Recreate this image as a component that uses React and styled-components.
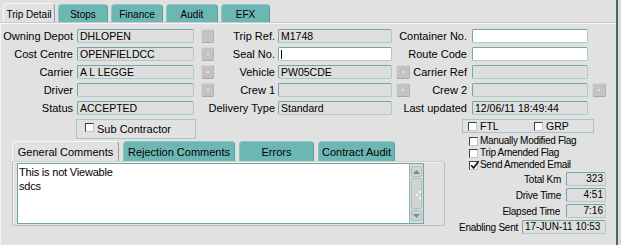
import styled, { createGlobalStyle } from "styled-components"

const teal = "#6cb7b4"
const tealLine = "#74a6a4"
const bg = "#e1e1e1"

const GlobalStyle = createGlobalStyle`
  html, body { margin: 0; padding: 0; background: ${bg}; }
  body {
    font-family: "Liberation Sans", Arial, sans-serif;
    font-size: 11px;
    color: #000;
  }
`

const Screen = styled.div`
  width: 621px;
  height: 245px;
  display: flex;
  overflow: hidden;
  background: ${bg};
`

const Main = styled.div`
  flex: 1;
  display: flex;
  flex-direction: column;
  min-width: 0;
`

const WindowEdge = styled.div`
  width: 5px;
  box-sizing: border-box;
  border-left: 2px solid #4f6767;
  background: #dadada;
`

const TabBar = styled.div`
  height: 23px;
  display: flex;
  align-items: flex-end;
  gap: ${p => p.$gap}px;
  padding-left: ${p => p.$left}px;
  box-sizing: border-box;
  flex-shrink: 0;
`

const Tab = styled.div`
  width: ${p => p.$w}px;
  height: ${p => p.$h}px;
  box-sizing: border-box;
  display: flex;
  align-items: center;
  justify-content: center;
  font-size: ${p => p.$size}px;
  white-space: nowrap;
  border-radius: 4px 4px 0 0;
  background: ${p => (p.$active ? bg : teal)};
  border: 1px solid ${p => (p.$active ? "#f7f7f7" : "#8cc6c3")};
  border-right-color: ${p => (p.$active ? "#9a9a9a" : "#5c9c99")};
  border-bottom: none;
  padding-top: 1px;
`

const Panel = styled.div`
  flex: 1;
  border-top: 1px solid #f7f7f7;
  border-left: 1px solid #f3f3f3;
  box-shadow: 0 -1px 0 #c9c9c9;
  padding-top: 3px;
  display: flex;
  flex-direction: column;
`

const FieldRow = styled.div`
  height: 18px;
  display: flex;
  align-items: center;
`

const Group = styled.div`
  display: flex;
  align-items: center;
  flex-shrink: 0;
`

const Label = styled.div`
  width: ${p => p.$w}px;
  margin-right: ${p => p.$gap}px;
  display: flex;
  justify-content: flex-end;
  white-space: nowrap;
  font-size: 11px;
  flex-shrink: 0;
`

const Input = styled.div`
  position: relative;
  width: ${p => p.$w}px;
  height: 14px;
  box-sizing: border-box;
  background: ${p => (p.$white ? "#fff" : "#dedede")};
  border: 1px solid;
  border-color: ${tealLine} #a9cbc9 #a9cbc9 ${tealLine};
  border-radius: 2px;
  font-size: ${p => p.$size || 10.5}px;
  line-height: 12px;
  padding: 0 2px;
  white-space: nowrap;
  overflow: hidden;
  text-align: ${p => (p.$right ? "right" : "left")};
  flex-shrink: 0;
`

const Caret = styled.span`
  position: absolute;
  left: 2px;
  top: 2px;
  width: 1px;
  height: 9px;
  background: #000;
`

const BtnSlot = styled.div`
  width: ${p => p.$w}px;
  margin-left: ${p => p.$gap}px;
  height: 14px;
  flex-shrink: 0;
`

const SmallButton = styled.div`
  width: 100%;
  height: 100%;
  box-sizing: border-box;
  background: #c3c3c3;
  border: 1px solid #d6d6d6;
  border-bottom-color: #a9a9a9;
  border-right-color: #b3b3b3;
  border-radius: 2px;
  display: flex;
  align-items: center;
  justify-content: center;

  &::after {
    content: "";
    width: 2px;
    height: 2px;
    background: ${p => (p.$dot ? "#e4e4e4" : "transparent")};
  }
`

const BottomArea = styled.div`
  display: flex;
`

const LeftBottom = styled.div`
  width: 461px;
  display: flex;
  flex-direction: column;
  flex-shrink: 0;
`

const GroupBox = styled.div`
  margin-top: 2px;
  margin-left: ${p => p.$left || 0}px;
  width: ${p => p.$w}px;
  height: ${p => p.$h}px;
  box-sizing: border-box;
  border: 1px solid #a3c9c7;
  display: flex;
  align-items: ${p => p.$align || "center"};
  padding: ${p => p.$pad};
`

const Check = styled.div`
  width: 9px;
  height: 9px;
  box-sizing: border-box;
  background: #fff;
  border: 1px solid;
  border-color: #3f3f3f #c4c4c4 #c4c4c4 #3f3f3f;
  flex-shrink: 0;
  position: relative;

  svg {
    position: absolute;
    left: 0;
    top: -2px;
  }
`

const CheckItem = styled.div`
  display: flex;
  align-items: ${p => p.$align || "center"};
  width: ${p => (p.$w ? `${p.$w}px` : "auto")};
  gap: ${p => p.$gap || 3}px;
  line-height: 12px;
  font-size: ${p => p.$size || 11}px;
  letter-spacing: ${p => p.$ls || 0}px;
  white-space: nowrap;
`

const CommentTabs = styled(TabBar)`
  height: 20px;
  margin-top: 2px;
  margin-left: 11px;
`

const CommentPanel = styled.div`
  margin-left: 11px;
  width: 433px;
  height: 65px;
  box-sizing: border-box;
  border: 1px solid #bdbdbd;
  border-top-color: #cfcfcf;
  border-radius: 0 3px 3px 3px;
  box-shadow: 1px 1px 0 #f2f2f2 inset;
  padding: 1px 0 0 4px;
`

const TextBox = styled.div`
  width: 407px;
  height: 61px;
  box-sizing: border-box;
  border: 1px solid ${tealLine};
  background: #fff;
  display: flex;
`

const TextContent = styled.div`
  flex: 1;
  padding: 1px 1px;
  font-size: 11px;
  line-height: 14px;
  letter-spacing: -0.2px;
`

const Scrollbar = styled.div`
  width: 14px;
  box-sizing: border-box;
  background: #d9d9d9;
  border-left: 1px solid #8dbab8;
  display: flex;
  flex-direction: column;
  gap: 1px;
  padding: 2px 1px 2px 1px;
`

const ScrollButton = styled.div`
  height: ${p => p.$h}px;
  box-sizing: border-box;
  border: 1px solid #9fc6c4;
  border-radius: 2px;
  background: #d2d2d2;
  display: flex;
  align-items: center;
  justify-content: center;
`

const Thumb = styled(ScrollButton)`
  flex: 1;
  position: relative;
`

const Dot = styled.span`
  position: absolute;
  width: 2px;
  height: 2px;
  background: #fafafa;
`

const RightBottom = styled.div`
  width: 144px;
  display: flex;
  flex-direction: column;
  flex-shrink: 0;
`

const FlagList = styled.div`
  margin-top: 2px;
  padding-left: 7px;
  display: flex;
  flex-direction: column;
`

const FlagRow = styled.div`
  height: 12px;
  display: flex;
  align-items: center;
`

const StatList = styled.div`
  margin-top: 1px;
  display: flex;
  flex-direction: column;
  gap: 2px;
`

const StatRow = styled.div`
  height: 14px;
  display: flex;
  align-items: center;
  justify-content: flex-end;
`

const StatLabel = styled.div`
  margin-right: ${p => p.$gap}px;
  font-size: 10px;
  letter-spacing: -0.25px;
  white-space: nowrap;
`

const cols = [
  { lw: 72, lg: 4, iw: 117, bg: 7, bw: 13 },
  { lw: 61, lg: 3, iw: 114, bg: 4, bw: 14 },
  { lw: 57, lg: 5, iw: 116, bg: 4, bw: 14 },
]

const rows = [
  [
    { label: "Owning Depot", value: "DHLOPEN", btn: "plain" },
    { label: "Trip Ref.", value: "M1748" },
    { label: "Container No.", white: true },
  ],
  [
    { label: "Cost Centre", value: "OPENFIELDCC", btn: "dot" },
    { label: "Seal No.", white: true, caret: true },
    { label: "Route Code", white: true },
  ],
  [
    { label: "Carrier", value: "A L LEGGE", btn: "dot" },
    { label: "Vehicle", value: "PW05CDE", btn: "dot" },
    { label: "Carrier Ref" },
  ],
  [
    { label: "Driver", btn: "dot" },
    { label: "Crew 1", btn: "dot" },
    { label: "Crew 2", btn: "dot" },
  ],
  [
    { label: "Status", value: "ACCEPTED" },
    { label: "Delivery Type", value: "Standard" },
    { label: "Last updated", value: "12/06/11 18:49:44" },
  ],
]

const topTabs = [
  { name: "Trip Detail", w: 52, active: true },
  { name: "Stops", w: 50 },
  { name: "Finance", w: 52 },
  { name: "Audit", w: 52 },
  { name: "EFX", w: 49 },
]

const commentTabs = [
  { name: "General Comments", w: 107, active: true },
  { name: "Rejection Comments", w: 112 },
  { name: "Errors", w: 75 },
  { name: "Contract Audit", w: 77 },
]

const flags = [
  { name: "Manually Modified Flag" },
  { name: "Trip Amended Flag" },
  { name: "Send Amended Email", checked: true },
]

const stats = [
  { label: "Total Km", value: "323", w: 40, gap: 5, right: true },
  { label: "Drive Time", value: "4:51", w: 40, gap: 5, right: true },
  { label: "Elapsed Time", value: "7:16", w: 40, gap: 6, right: true },
  { label: "Enabling Sent", value: "17-JUN-11 10:53", w: 84, gap: 4 },
]

const CheckBox = ({ checked }) => (
  <Check>
    {checked && (
      <svg width="10" height="10" viewBox="0 0 10 10">
        <path d="M1.2 5.2 L3.6 8 L8.6 1.2" fill="none" stroke="#111" strokeWidth="1.7" />
      </svg>
    )}
  </Check>
)

const Field = ({ col, field }) => (
  <Group>
    <Label $w={col.lw} $gap={col.lg}>{field.label}</Label>
    <Input $w={col.iw} $white={field.white}>
      {field.caret && <Caret />}
      {field.value}
    </Input>
    <BtnSlot $w={col.bw} $gap={col.bg}>
      {field.btn && <SmallButton $dot={field.btn === "dot"} />}
    </BtnSlot>
  </Group>
)

export default function App() {
  return (
    <Screen>
      <GlobalStyle />
      <Main>
        <TabBar $gap={3} $left={3}>
          {topTabs.map(t => (
            <Tab key={t.name} $w={t.w} $h={t.active ? 20 : 19} $size={10} $active={t.active}>
              {t.name}
            </Tab>
          ))}
        </TabBar>
        <Panel>
          {rows.map((row, i) => (
            <FieldRow key={i}>
              {row.map((field, j) => (
                <Field key={field.label} col={cols[j]} field={field} />
              ))}
            </FieldRow>
          ))}
          <BottomArea>
            <LeftBottom>
              <GroupBox $left={75} $w={120} $h={20} $align="flex-start" $pad="3px 0 0 8px">
                <CheckItem $align="flex-start" $gap={3} $size={11}>
                  <CheckBox />
                  <span>Sub Contractor</span>
                </CheckItem>
              </GroupBox>
              <CommentTabs $gap={4} $left={0}>
                {commentTabs.map(t => (
                  <Tab key={t.name} $w={t.w} $h={20} $size={11} $active={t.active}>
                    {t.name}
                  </Tab>
                ))}
              </CommentTabs>
              <CommentPanel>
                <TextBox>
                  <TextContent>
                    This is not Viewable
                    <br />
                    sdcs
                  </TextContent>
                  <Scrollbar>
                    <ScrollButton $h={11}>
                      <svg width="7" height="4" viewBox="0 0 7 4">
                        <path d="M0 4 L3.5 0 L7 4 Z" fill="#7b8b8b" />
                      </svg>
                    </ScrollButton>
                    <Thumb $h={33}>
                      <Dot style={{ left: 7, top: 12 }} />
                      <Dot style={{ left: 4, top: 15 }} />
                      <Dot style={{ left: 7, top: 18 }} />
                    </Thumb>
                    <ScrollButton $h={11}>
                      <svg width="7" height="4" viewBox="0 0 7 4">
                        <path d="M0 0 L3.5 4 L7 0 Z" fill="#7b8b8b" />
                      </svg>
                    </ScrollButton>
                  </Scrollbar>
                </TextBox>
              </CommentPanel>
            </LeftBottom>
            <RightBottom>
              <GroupBox $w={132} $h={14} $pad="0 0 0 5px">
                <CheckItem $w={66} $gap={3} $size={10.5}>
                  <CheckBox />
                  <span>FTL</span>
                </CheckItem>
                <CheckItem $gap={3} $size={10.5}>
                  <CheckBox />
                  <span>GRP</span>
                </CheckItem>
              </GroupBox>
              <FlagList>
                {flags.map(f => (
                  <FlagRow key={f.name}>
                    <CheckItem $gap={2} $size={10} $ls={-0.3}>
                      <CheckBox checked={f.checked} />
                      <span>{f.name}</span>
                    </CheckItem>
                  </FlagRow>
                ))}
              </FlagList>
              <StatList>
                {stats.map(s => (
                  <StatRow key={s.label}>
                    <StatLabel $gap={s.gap}>{s.label}</StatLabel>
                    <Input $w={s.w} $right={s.right} $size={10}>{s.value}</Input>
                  </StatRow>
                ))}
              </StatList>
            </RightBottom>
          </BottomArea>
        </Panel>
      </Main>
      <WindowEdge />
    </Screen>
  )
}
